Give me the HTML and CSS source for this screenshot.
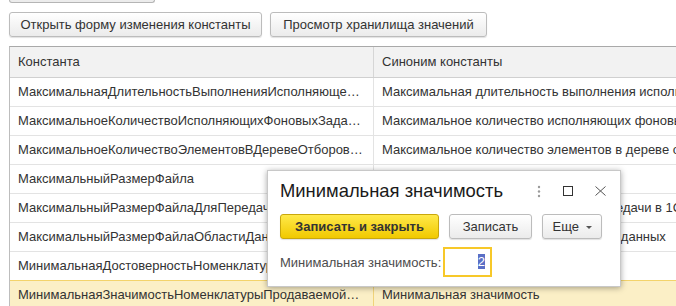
FILE: index.html
```html
<!DOCTYPE html>
<html lang="ru">
<head>
  <meta charset="UTF-8" />
  <title>Константы</title>
  <link rel="stylesheet" href="styles.css">
</head>
<body>
  <div class="page">
    <div class="cut-btn"></div>

    <div class="toolbar">
      <button class="btn btn-wide">Открыть форму изменения константы</button>
      <button class="btn btn-store">Просмотр хранилища значений</button>
    </div>

    <div class="grid">
      <div class="row head">
        <div class="cell c1">Константа</div>
        <div class="cell c2">Синоним константы</div>
      </div>
      <div class="row">
        <div class="cell c1">МаксимальнаяДлительностьВыполненияИсполняющегоФоновогоЗадания</div>
        <div class="cell c2">Максимальная длительность выполнения исполняющего фонового задания</div>
      </div>
      <div class="row">
        <div class="cell c1">МаксимальноеКоличествоИсполняющихФоновыхЗаданийОбработки</div>
        <div class="cell c2">Максимальное количество исполняющих фоновых заданий</div>
      </div>
      <div class="row">
        <div class="cell c1">МаксимальноеКоличествоЭлементовВДеревеОтборовНоменклатуры</div>
        <div class="cell c2">Максимальное количество элементов в дереве отборов номенклатуры</div>
      </div>
      <div class="row">
        <div class="cell c1">МаксимальныйРазмерФайла</div>
        <div class="cell c2">Максимальный размер файла</div>
      </div>
      <div class="row">
        <div class="cell c1">МаксимальныйРазмерФайлаДляПередачиВ1С</div>
        <div class="cell c2">Максимальный размер файла для передачи в 1С</div>
      </div>
      <div class="row">
        <div class="cell c1">МаксимальныйРазмерФайлаОбластиДанных</div>
        <div class="cell c2">Максимальный размер файла области данных</div>
      </div>
      <div class="row">
        <div class="cell c1">МинимальнаяДостоверностьНоменклатуры</div>
        <div class="cell c2">Минимальная достоверность</div>
      </div>
      <div class="row selected">
        <div class="cell c1">МинимальнаяЗначимостьНоменклатурыПродаваемойСовместно</div>
        <div class="cell c2">Минимальная значимость</div>
      </div>
    </div>
  </div>

  <div class="dialog">
    <div class="dlg-head">
      <div class="dlg-title">Минимальная значимость</div>
      <div class="dlg-icons">
        <svg width="4" height="13" viewBox="0 0 4 13"><circle cx="2" cy="2" r="1.2" fill="#9a9a9a"/><circle cx="2" cy="6.5" r="1.2" fill="#9a9a9a"/><circle cx="2" cy="11" r="1.2" fill="#9a9a9a"/></svg>
        <svg width="10" height="10" viewBox="0 0 10 10"><rect x="0.5" y="0.5" width="9" height="9" fill="none" stroke="#333" stroke-width="1"/></svg>
        <svg width="11" height="10" viewBox="0 0 11 10"><path d="M0.5 0.5 L10.5 9.5 M10.5 0.5 L0.5 9.5" stroke="#555" stroke-width="1" fill="none"/></svg>
      </div>
    </div>
    <div class="dlg-buttons">
      <button class="btn btn-main">Записать и закрыть</button>
      <button class="btn btn-save">Записать</button>
      <button class="btn btn-more">Еще <span class="caret"></span></button>
    </div>
    <div class="dlg-field">
      <span class="field-label">Минимальная значимость:</span>
      <div class="field-input"><span class="sel">2</span></div>
    </div>
  </div>
</body>
</html>
```

FILE: styles.css
```css
body {
  margin: 0;
  font-family: "Liberation Sans", Arial, sans-serif;
  font-size: 13px;
  color: #333;
  background: #fff;
  overflow: hidden;
  width: 676px;
  height: 306px;
}
.page {
  padding-left: 9px;
}
.cut-btn {
  width: 144px;
  height: 2px;
  border: 1px solid #b5b5b5;
  border-top: none;
  border-radius: 0 0 3px 3px;
  background: #ececec;
}
.toolbar {
  display: flex;
  gap: 8px;
  margin-top: 9px;
}
.btn {
  font-family: "Liberation Sans", Arial, sans-serif;
  font-size: 13px;
  color: #333;
  height: 25px;
  padding: 0;
  white-space: nowrap;
  border: 1px solid #bcbcbc;
  border-radius: 3px;
  background: linear-gradient(#ffffff, #ebebeb);
  box-shadow: 0 1px 1px rgba(0,0,0,0.12);
  cursor: pointer;
}
.btn-wide { width: 253px; }
.btn-store { width: 217px; }

.grid {
  margin-top: 9px;
  width: 720px;
  border-top: 1px solid #a9a9a9;
  border-left: 1px solid #bdbdbd;
}
.row {
  display: flex;
  height: 28px;
  border-bottom: 1px solid #e3e3e3;
}
.row.head {
  height: 30px;
  background: #f2f2f2;
  border-bottom: 1px solid #d0d0d0;
}
.cell {
  line-height: 28px;
  padding-left: 8px;
  white-space: nowrap;
  overflow: hidden;
}
.head .cell { line-height: 30px; }
.c1 {
  width: 345px;
  text-overflow: ellipsis;
  padding-right: 10px;
  border-right: 1px solid #e3e3e3;
}
.head .c1 { border-right: 1px solid #d6d6d6; }
.c2 {
  flex: 1;
}
.row.selected {
  background: #fbefc6;
  border-top: 1px solid #f3d36b;
  margin-top: -1px;
  height: 26px;
}
.selected .c1 { border-right: 1px solid #f0d37a; }

.dialog {
  position: absolute;
  left: 267px;
  top: 170px;
  width: 354px;
  height: 117px;
  background: #fff;
  border: 1px solid #c8c8c8;
  box-shadow: 0 1px 6px rgba(0,0,0,0.35);
  box-sizing: border-box;
  padding: 8px 0 0 12px;
}
.dlg-head {
  display: flex;
  align-items: center;
  height: 24px;
}
.dlg-title {
  font-size: 18.4px;
  color: #1a1a1a;
  flex: 1;
}
.dlg-icons {
  display: flex;
  align-items: center;
  gap: 22px;
  padding-right: 14px;
}
.dlg-buttons {
  display: flex;
  gap: 10px;
  margin-top: 11px;
}
.btn-main {
  width: 159px;
  font-weight: bold;
  background: linear-gradient(#ffe94a, #f1c900);
  border-color: #c9a70c;
}
.btn-save { width: 83px; }
.btn-more { width: 60px; }
.caret {
  display: inline-block;
  vertical-align: middle;
  margin-left: 3px;
  border-left: 3px solid transparent;
  border-right: 3px solid transparent;
  border-top: 3px solid #555;
}
.dlg-field {
  display: flex;
  align-items: center;
  margin-top: 8px;
}
.field-label {
  color: #4d4d4d;
  width: 163px;
}
.field-input {
  width: 40px;
  height: 26px;
  border: 2px solid #f7c829;
  text-align: right;
  line-height: 26px;
  padding-right: 5px;
}
.sel {
  background: #5a6fc6;
  color: #fff;
}
```
